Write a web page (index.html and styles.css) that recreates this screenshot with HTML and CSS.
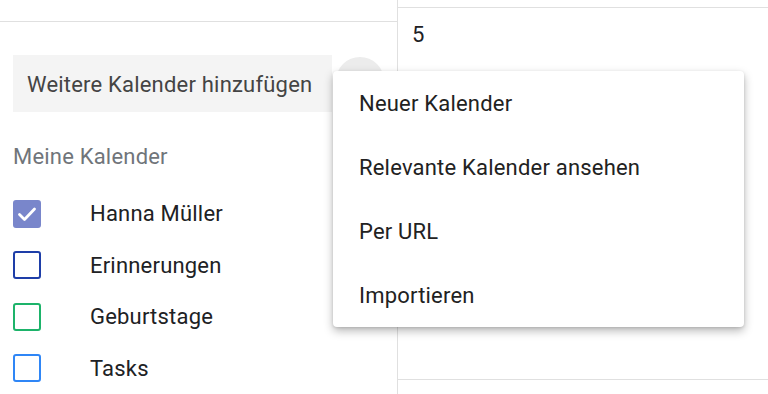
FILE: index.html
```html
<!DOCTYPE html>
<html lang="de">
<head>
<meta charset="utf-8">
<link rel="stylesheet" href="styles.css">
</head>
<body>
<div class="app">
  <aside class="sidebar">
    <div class="side-top"></div>
    <div class="add-row">
      <div class="add-field">Weitere Kalender hinzufügen</div>
      <div class="add-btn"></div>
    </div>
    <div class="section-title">Meine Kalender</div>
    <ul class="cal-list">
      <li class="cal"><span class="box checked"><svg viewBox="0 0 24 24" width="24" height="24"><path d="M4.5 12.5l5 5L19.5 7" fill="none" stroke="#fff" stroke-width="2.8" stroke-linecap="round" stroke-linejoin="round"/></svg></span><span class="cal-name">Hanna Müller</span></li>
      <li class="cal"><span class="box c-blue-dark"></span><span class="cal-name">Erinnerungen</span></li>
      <li class="cal"><span class="box c-green"></span><span class="cal-name">Geburtstage</span></li>
      <li class="cal"><span class="box c-blue"></span><span class="cal-name">Tasks</span></li>
    </ul>
  </aside>
  <main class="main">
    <div class="main-top"></div>
    <div class="day-cell">
      <div class="day-num">5</div>
    </div>
  </main>
  <div class="menu">
    <div class="menu-item">Neuer Kalender</div>
    <div class="menu-item">Relevante Kalender ansehen</div>
    <div class="menu-item">Per URL</div>
    <div class="menu-item">Importieren</div>
  </div>
</div>
</body>
</html>
```
FILE: styles.css
```css
* { box-sizing: border-box; }
html, body { margin: 0; padding: 0; background: #fff; }
body {
  font-family: Roboto, "Liberation Sans", Arial, sans-serif;
  color: #202124;
  letter-spacing: 0.2px;
  width: 768px;
  height: 394px;
  overflow: hidden;
}
.app {
  position: relative;
  display: flex;
  width: 768px;
  height: 394px;
}
.sidebar {
  width: 398px;
  flex: none;
  border-right: 1px solid #e0e0e0;
}
.side-top {
  height: 22px;
  border-bottom: 1px solid #e0e0e0;
}
.add-row {
  display: flex;
  align-items: flex-start;
  gap: 4px;
  margin: 33px 0 0 13px;
}
.add-field {
  width: 319px;
  height: 57px;
  background: #f4f4f4;
  display: flex;
  align-items: center;
  padding: 2px 0 0 14px;
  font-size: 22px;
  color: #444;
}
.add-btn {
  width: 48px;
  height: 48px;
  border-radius: 50%;
  background: #ececec;
  margin-top: 2px;
}
.section-title {
  margin: 31px 0 0 13px;
  font-size: 22px;
  color: #70757a;
  line-height: 28px;
}
.cal-list {
  list-style: none;
  margin: 17px 0 0 0;
  padding: 0 0 0 13px;
}
.cal {
  display: flex;
  align-items: center;
  height: 51.5px;
}
.box {
  width: 28px;
  height: 28px;
  border-radius: 3px;
  border: 2px solid;
  flex: none;
  display: flex;
  align-items: center;
  justify-content: center;
}
.box.checked { background: #7986cb; border-color: #7986cb; }
.c-blue-dark { border-color: #1e3ea8; }
.c-green { border-color: #1db36a; }
.c-blue { border-color: #2f86f6; }
.cal-name {
  margin-left: 49px;
  font-size: 22px;
  color: #202124;
}
.main {
  flex: 1;
  display: flex;
  flex-direction: column;
}
.main-top {
  height: 8px;
  border-bottom: 1px solid #e0e0e0;
}
.day-cell {
  height: 372px;
  border-bottom: 1px solid #e0e0e0;
  padding: 14px 0 0 14px;
}
.day-num {
  font-size: 22px;
  color: #202124;
}
.menu {
  position: absolute;
  left: 333px;
  top: 71px;
  width: 411px;
  background: #fff;
  border-radius: 4px;
  box-shadow: 0 4px 10px rgba(0,0,0,0.28), 0 1px 3px rgba(0,0,0,0.12);
}
.menu-item {
  height: 64px;
  display: flex;
  align-items: center;
  padding-left: 26px;
  font-size: 22px;
  color: #222;
}
```
